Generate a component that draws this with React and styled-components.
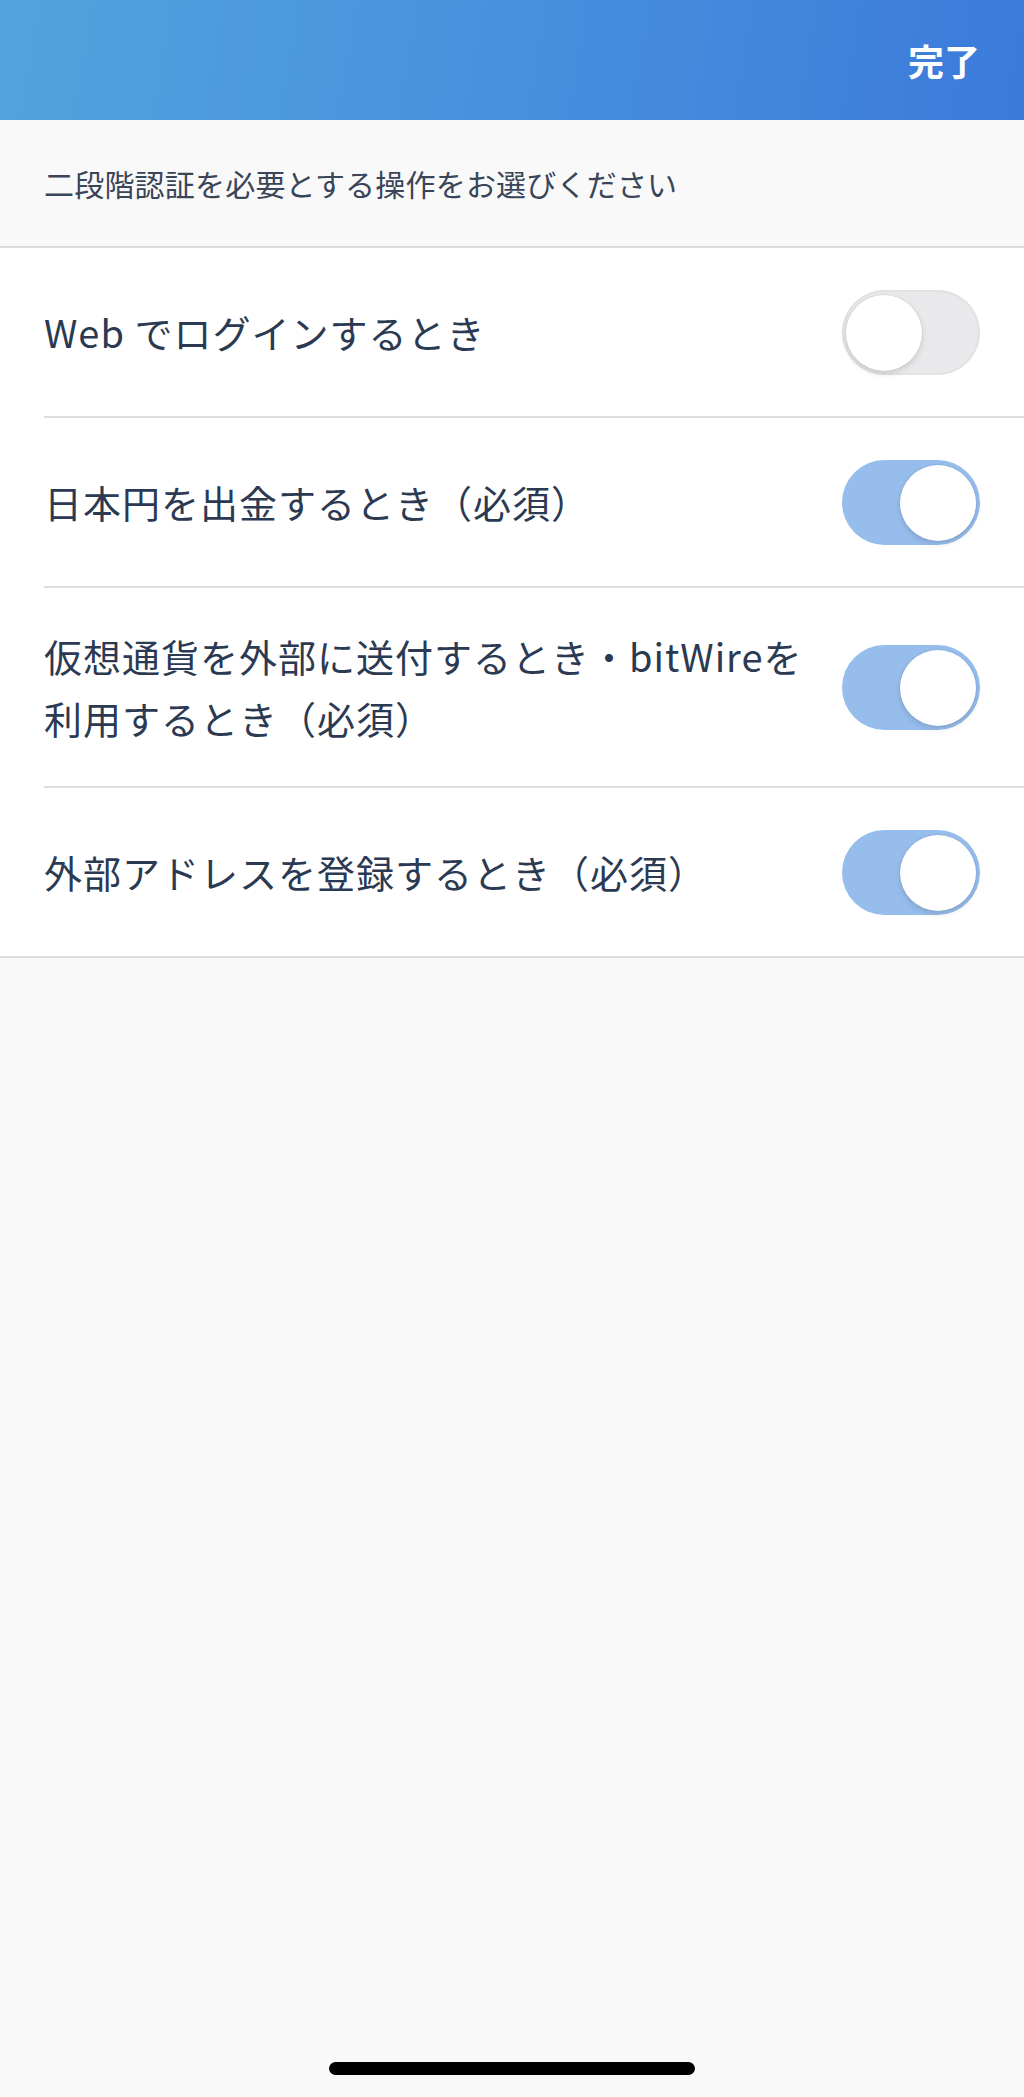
import React from 'react';
import styled, { createGlobalStyle } from 'styled-components';

const GlobalStyle = createGlobalStyle`
   html, body {
      margin: 0;
      padding: 0;
      background: #f9f9f9;
   }
   body {
      font-family: 'Noto Sans CJK JP', 'Noto Sans', sans-serif;
      -webkit-font-smoothing: antialiased;
   }
`;

const settings = [
   { id: 'web', label: ['Web でログインするとき'], on: false },
   { id: 'jpy', label: ['日本円を出金するとき（必須）'], on: true },
   {
      id: 'send',
      label: ['仮想通貨を外部に送付するとき・bitWireを', '利用するとき（必須）'],
      on: true,
   },
   { id: 'addr', label: ['外部アドレスを登録するとき（必須）'], on: true },
];

const App = () => {
   return (
      <Screen>
         <GlobalStyle />
         <Header>
            <DoneButton>完了</DoneButton>
         </Header>
         <Description>二段階認証を必要とする操作をお選びください</Description>
         <List>
            {settings.map((item) => (
               <Row key={item.id}>
                  <Label>
                     {item.label.map((line, i) => (
                        <React.Fragment key={i}>
                           {i > 0 && <br />}
                           {line}
                        </React.Fragment>
                     ))}
                  </Label>
                  <Switch on={item.on}>
                     <Knob on={item.on} />
                  </Switch>
               </Row>
            ))}
         </List>
         <HomeBar />
      </Screen>
   );
};

export default App;

const Screen = styled.div`
   display: flex;
   flex-direction: column;
   min-height: 100vh;
   background: #f9f9f9;
`;

const Header = styled.header`
   display: flex;
   align-items: center;
   justify-content: flex-end;
   height: 120px;
   padding: 0 44px;
   box-sizing: border-box;
   background: linear-gradient(100deg, #52a3de 0%, #4893dd 45%, #3b7adb 100%);
`;

const DoneButton = styled.button`
   border: none;
   background: none;
   padding: 0;
   margin: 0;
   color: #ffffff;
   font-family: 'Noto Sans CJK JP', sans-serif;
   font-size: 36px;
   font-weight: 700;
   line-height: 1;
   cursor: pointer;
`;

const Description = styled.div`
   display: flex;
   align-items: center;
   height: 128px;
   padding: 0 44px;
   box-sizing: border-box;
   border-bottom: 2px solid #dcdcdc;
   color: #3a4558;
   font-size: 30px;
   letter-spacing: 0.2px;
   line-height: 1;
`;

const List = styled.div`
   background: #ffffff;
   border-bottom: 2px solid #dcdcdc;
`;

const Row = styled.div`
   display: flex;
   align-items: center;
   justify-content: space-between;
   gap: 20px;
   min-height: 170px;
   margin-left: 44px;
   padding: 37px 44px 37px 0;
   box-sizing: border-box;
   border-bottom: 2px solid #dedede;

   &:last-child {
      border-bottom: none;
      min-height: 168px;
   }
`;

const Label = styled.div`
   color: #2b3a52;
   font-size: 38px;
   letter-spacing: 1px;
   line-height: 62px;
   white-space: nowrap;
`;

const Switch = styled.div`
   position: relative;
   flex: none;
   width: 138px;
   height: 85px;
   border-radius: 43px;
   box-sizing: border-box;
   background: ${(props) => (props.on ? '#97bdec' : '#e9e9eb')};
   box-shadow: ${(props) => (props.on ? 'none' : 'inset 0 0 0 2px #e2e2e4')};
`;

const Knob = styled.div`
   position: absolute;
   top: 5px;
   left: ${(props) => (props.on ? '58px' : '4px')};
   width: 76px;
   height: 76px;
   border-radius: 50%;
   background: #ffffff;
   box-shadow: 0 3px 6px rgba(0, 0, 0, 0.12), 0 0 0 1px rgba(0, 0, 0, 0.04);
`;

const HomeBar = styled.div`
   align-self: center;
   width: 366px;
   height: 13px;
   margin-top: auto;
   margin-bottom: 22px;
   border-radius: 7px;
   background: #000000;
`;
